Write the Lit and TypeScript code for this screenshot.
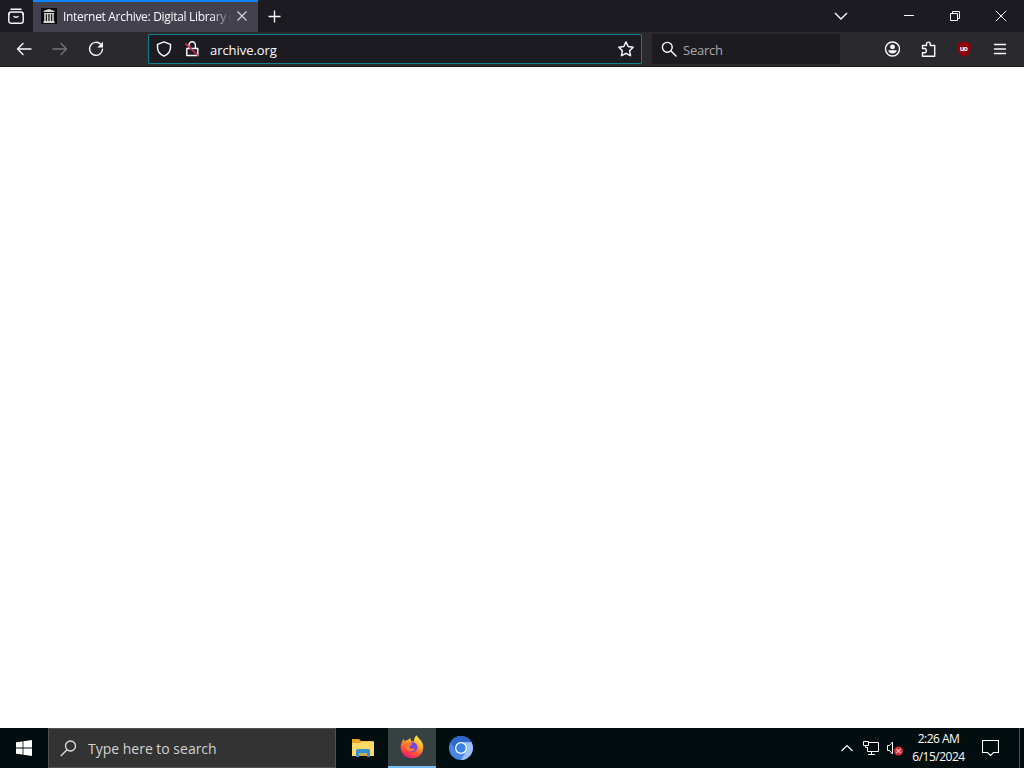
import { LitElement, html, css } from "lit";
import { customElement, property } from "lit/decorators.js";

@customElement("tab-strip")
export class TabStrip extends LitElement {
  static styles = css`
    :host {
      display: flex;
      height: 32px;
      background: #1c1b21;
      color: #fbfbfe;
    }
    svg {
      display: block;
      flex: none;
      fill: none;
      stroke: currentColor;
    }
    .view {
      width: 33px;
      display: flex;
      align-items: center;
      padding-left: 8px;
      box-sizing: border-box;
    }
    .tab {
      width: 225px;
      box-sizing: border-box;
      display: flex;
      align-items: center;
      padding: 0 10px 0 8px;
      background: #42414d;
      border-top: 2px solid #0a84ff;
    }
    .title {
      flex: 1;
      margin: 0 3px 0 6px;
      overflow: hidden;
      white-space: nowrap;
      font-size: 12px;
      line-height: 18px;
      letter-spacing: -0.31px;
      mask-image: linear-gradient(to left, transparent 1px, #000 22px);
    }
    .icon {
      margin-bottom: 2px;
    }
    .favicon {
      stroke: none;
    }
    .close {
      color: #d8d8de;
    }
    .new {
      padding: 9px 0 0 9px;
    }
    .controls {
      display: flex;
      margin-left: auto;
    }
    .control {
      width: 46px;
      display: flex;
      align-items: center;
      justify-content: center;
    }
    .list {
      width: 90px;
    }
  `;

  @property() title = "";

  render() {
    return html`
      <div class="view">
        <svg width="16" height="16" viewBox="0 0 16 16" stroke-width="1.4" stroke-linecap="round">
          <path d="M3 1.200h10" />
          <rect x=".8" y="4" width="14.400" height="11.200" rx="2.300" />
          <path d="M1 6.500V5.500M15 6.500V5.500M6 8.500q2 1.500 4 0" />
        </svg>
      </div>
      <div class="tab">
        <svg class="icon favicon" width="16" height="16" viewBox="0 0 16 16">
          <path fill="#0b0b0b" d="M0 0h16v16H0z" />
          <path
            fill="#d4d4d4"
            d="M8 1l5.500 2v1h-11V3zM3 5h10v1H3zM3.200 6h1.600v7H3.200zM5.900 6h1.500v7H5.900zM8.600 6h1.500v7H8.600zM11.200 6h1.600v7h-1.600zM2.500 13h11v2h-11z"
          />
        </svg>
        <div class="title">${this.title}</div>
        <svg class="icon close" width="12" height="12" viewBox="0 0 12 12" stroke-width="1.100">
          <path d="M1.500 1.500l9 9M10.500 1.500l-9 9" />
        </svg>
      </div>
      <div class="new">
        <svg width="14" height="14" viewBox="0 0 14 14" stroke-width="1.300">
          <path d="M7.500 1.500v12M1.500 7.500h12" />
        </svg>
      </div>
      <div class="controls">
        <div class="control list">
          <svg width="14" height="14" viewBox="0 0 14 14" stroke-width="1.400">
            <path d="M1 4l6 6 6-6" />
          </svg>
        </div>
        <div class="control">
          <svg width="10" height="10" viewBox="0 0 10 10"><path d="M0 4.500h10" /></svg>
        </div>
        <div class="control">
          <svg width="10" height="10" viewBox="0 0 10 10">
            <path d="M.5 2.500h7v7h-7zM2.500 2.500v-2h7v7h-2" />
          </svg>
        </div>
        <div class="control">
          <svg width="12" height="12" viewBox="0 0 12 12"><path d="M.8.8l10.400 10.400M11.200.8L.8 11.200" /></svg>
        </div>
      </div>
    `;
  }
}

@customElement("nav-bar")
export class NavBar extends LitElement {
  static styles = css`
    :host {
      display: flex;
      align-items: center;
      height: 35px;
      box-sizing: border-box;
      padding: 0 16px;
      background: #2a292e;
      border-bottom: 1px solid #17161b;
      color: #fbfbfe;
    }
    svg {
      display: block;
      flex: none;
      fill: none;
      stroke: currentColor;
      stroke-width: 1.4;
    }
    .buttons {
      display: flex;
      gap: 20px;
      width: 132px;
    }
    .disabled {
      color: #75747a;
    }
    .url {
      width: 494px;
      height: 30px;
      box-sizing: border-box;
      display: flex;
      align-items: center;
      padding: 0 7px;
      background: #1c1b22;
      border: 1px solid #127f8b;
      border-radius: 1px;
    }
    .lock {
      margin-left: 12px;
    }
    .address {
      flex: 1;
      margin-left: 10px;
      padding-top: 1px;
      font-size: 13px;
      letter-spacing: -0.05px;
    }
    .search {
      width: 188px;
      height: 30px;
      box-sizing: border-box;
      margin-left: 10px;
      padding-left: 9px;
      display: flex;
      align-items: center;
      gap: 6px;
      background: #1c1b20;
    }
    .hint {
      padding-top: 1px;
      font-size: 13px;
      letter-spacing: -0.25px;
      color: #a9a9ae;
    }
    .tools {
      display: flex;
      gap: 20px;
      margin-left: auto;
    }
    .badge {
      stroke: none;
    }
    .mark {
      font: bold 7px "Open Sans", sans-serif;
      fill: #fff;
    }
  `;

  @property() address = "";

  render() {
    return html`
      <div class="buttons">
        <svg width="16" height="16" viewBox="0 0 16 16" stroke-linecap="round" stroke-linejoin="round">
          <path d="M15 8H1.500M7 2.500L1.500 8 7 13.500" />
        </svg>
        <svg class="disabled" width="16" height="16" viewBox="0 0 16 16" stroke-linecap="round" stroke-linejoin="round">
          <path d="M1 8h13.500M9 2.500L14.500 8 9 13.500" />
        </svg>
        <svg width="16" height="16" viewBox="0 0 16 16" stroke-linecap="round">
          <path d="M12.700 3.300A6.500 6.500 0 1 0 14.500 8.300" />
          <path fill="currentColor" stroke="none" d="M15 .8v5.700H9.300z" />
        </svg>
      </div>
      <div class="url">
        <svg width="16" height="16" viewBox="0 0 16 16" stroke-linejoin="round">
          <path d="M8 .9l6.500 2.500v2.800c0 4-2.500 7.300-6.500 9-4-1.700-6.500-5-6.500-9V3.400z" />
        </svg>
        <svg class="lock" width="16" height="16" viewBox="0 0 16 16" stroke-linejoin="round">
          <path d="M5 7V4a3.200 3.200 0 0 1 6.400 0v3M2.800 7.500h11v7h-11z" />
          <path stroke="#e22850" stroke-width="1.700" d="M1.500 2.500l12.500 12" />
        </svg>
        <div class="address">${this.address}</div>
        <svg width="16" height="16" viewBox="0 0 16 16" stroke-linejoin="round">
          <path d="M8 .9l2.200 4.600 5 .7-3.600 3.500.9 5L8 12.300l-4.500 2.400.9-5L.8 6.200l5-.7z" />
        </svg>
      </div>
      <div class="search">
        <svg width="16" height="16" viewBox="0 0 16 16" stroke-linecap="round">
          <circle cx="6.300" cy="6.300" r="4.900" />
          <path d="M10 10l5 5" />
        </svg>
        <div class="hint">Search</div>
      </div>
      <div class="tools">
        <svg width="16" height="16" viewBox="-.5 0 16 16">
          <circle cx="8" cy="8" r="7" />
          <circle cx="8" cy="5.900" r="2.400" fill="currentColor" stroke="none" />
          <path fill="currentColor" stroke="none" d="M3.800 9.300h8.400c0 1.900-1.800 3.300-4.200 3.300s-4.200-1.400-4.200-3.300z" />
        </svg>
        <svg width="16" height="16" viewBox="-.5 0 16 16" stroke-linejoin="round">
          <path
            d="M2 7.500V4.500h4V3a1.900 1.900 0 0 1 3.800 0v1.500h4.400v10.700H2v-3.500h2.200a1.600 1.600 0 0 0 1.600-1.600v-1a1.600 1.600 0 0 0-1.600-1.600z"
          />
        </svg>
        <svg class="badge" width="16" height="16" viewBox="0 0 16 16">
          <path fill="#900006" d="M8 0c2 1.500 4 2 6.700 2v5c0 4-2.200 7-6.700 9C3.500 14 1.300 11 1.300 7V2C4 2 6 1.500 8 0z" />
          <text class="mark" x="3.700" y="9.700">u</text>
          <text class="mark" x="7.600" y="9.700">o</text>
        </svg>
        <svg width="16" height="16" viewBox="0 0 16 16" stroke-linecap="round">
          <path d="M2.500 3.500h11M2.500 8h11M2.500 12.500h11" />
        </svg>
      </div>
    `;
  }
}

@customElement("task-bar")
export class TaskBar extends LitElement {
  static styles = css`
    :host {
      display: flex;
      height: 40px;
      background: #020d0f;
      color: #fff;
    }
    svg {
      display: block;
      flex: none;
      fill: none;
    }
    .app {
      width: 48px;
      height: 40px;
      flex: none;
      display: flex;
      align-items: center;
      justify-content: center;
    }
    .first {
      width: 52px;
    }
    .first svg,
    .last svg {
      margin-left: 2px;
    }
    .active {
      box-sizing: border-box;
      background: #374142;
      border-bottom: 2px solid #76b9ed;
    }
    .search {
      width: 288px;
      box-sizing: border-box;
      border: 1px solid #505050;
      background: #333;
      display: flex;
      align-items: center;
      gap: 11px;
      padding-left: 11px;
    }
    .hint {
      color: #d2d2d2;
      font-size: 14px;
      letter-spacing: -0.01px;
      padding-top: 1px;
    }
    .tray {
      display: flex;
      align-items: center;
      margin-left: auto;
    }
    .tray svg {
      stroke: currentColor;
    }
    .net {
      margin-left: 10px;
    }
    .volume {
      margin-left: 6px;
    }
    .clock {
      width: 71px;
      font-size: 12px;
      line-height: 18px;
      letter-spacing: -0.5px;
      text-align: center;
    }
    .notes {
      margin-left: 8px;
    }
    .edge {
      width: 5px;
      height: 40px;
      box-sizing: border-box;
      border-left: 1px solid #4b5455;
      margin-left: 20px;
    }
  `;

  @property() time = "";
  @property() date = "";

  render() {
    return html`
      <div class="app">
        <svg width="16" height="16" viewBox="0 0 16 16">
          <path fill="#fff" d="M0 2.300l6.600-.9v6.200H0zM7.400 1.300L16 0v7.600H7.400zM0 8.400h6.600v6.200L0 13.700zM7.400 8.400H16V16l-8.600-1.200z" />
        </svg>
      </div>
      <div class="search">
        <svg width="17" height="17" viewBox="0 0 17 17" stroke="#e0e0e0" stroke-width="1.300">
          <circle cx="10.500" cy="6" r="5" />
          <path d="M7 9.700L.8 16" />
        </svg>
        <div class="hint">Type here to search</div>
      </div>
      <div class="app first">
        <svg width="22" height="18" viewBox="0 0 22 18">
          <path fill="#e8a526" d="M0 0h7l2 2h12v5H0z" />
          <path fill="#ffda68" d="M0 4h8l1.500-1.500H22V17H0z" />
          <path fill="#358fd5" d="M4 18v-6.500q0-1.500 1.500-1.500h11q1.500 0 1.500 1.500V18h-3v-3.500H7V18z" />
          <path fill="#dba63b" d="M7 14.500h8V17H7z" />
        </svg>
      </div>
      <div class="app active">
        <svg width="24" height="24" viewBox="0 0 24 24">
          <defs>
            <linearGradient id="flame" x1=".8" y1="0" x2=".3" y2="1">
              <stop offset="0" stop-color="#fff44f" />
              <stop offset=".4" stop-color="#ffa62d" />
              <stop offset=".7" stop-color="#ff5036" />
              <stop offset="1" stop-color="#e9157d" />
            </linearGradient>
          </defs>
          <path
            fill="url(#flame)"
            d="M1.500 8c.4-2 1.300-3 2.500-4 0 1 .2 1.700.7 2.300C5.800 5.300 7 5 8 5c.8-1 1.500-1.600 2.600-2-.3 1.300 0 2.400 1 3.200L14 6.500c-.4-2.300.7-4.600 2.500-6.300 1.500 3 4.500 4.600 5.800 7.600.8 2 1.200 4 .8 6.200C22.400 19.500 17.700 23.300 12.200 23.300S1.500 19.500.8 14C.5 11.500.7 9.500 1.500 8z"
          />
          <circle cx="12.500" cy="12.300" r="5" fill="#7448df" />
          <path
            fill="#ff7a2b"
            d="M4 8c2.500-1.500 5-1 7 .3l1.500.5c-.3 1.300-1.800 1.500-2.700 2.200-.8.5-.6 1.600.3 2.300 1.500 1 3.400-.2 5 .4-1 2-3 3-5.200 2.500C7 15.500 4 12 4 8z"
          />
        </svg>
      </div>
      <div class="app last">
        <svg width="24" height="24" viewBox="0 0 24 24">
          <circle cx="12" cy="12" r="12" fill="#4a86e8" />
          <path fill="#2f68c8" d="M1.600 6A12 12 0 0 1 22.400 6.200H12A6 6 0 0 0 6.800 15z" />
          <path fill="#9dc0f7" d="M22.400 6.200A12 12 0 0 1 12 24l5.200-9A6 6 0 0 0 12 6.200z" />
          <circle cx="12" cy="12" r="6" fill="#fff" />
          <circle cx="12" cy="12" r="4.700" fill="#3b82e8" />
        </svg>
      </div>
      <div class="tray">
        <svg width="12" height="8" viewBox="0 0 12 8" stroke-width="1.200">
          <path d="M.5 7L6 1.500 11.500 7" />
        </svg>
        <svg class="net" width="17" height="16" viewBox="0 0 17 16">
          <path d="M5.500 2.500h10v9h-11V7M8.500 11.500v3M5 14.500h7M.5 1.500h5v4h-5zM2.500 5.500v2h2" />
        </svg>
        <svg class="volume" width="17" height="16" viewBox="0 0 17 16">
          <path d="M1.500 5.500h2l3-3.500v12l-3-3.500h-2z" />
          <circle cx="12.500" cy="11" r="4.500" fill="#d52f3b" stroke="none" />
          <path d="M10.500 9l4 4M14.500 9l-4 4" />
        </svg>
        <div class="clock">
          <div>${this.time}</div>
          <div>${this.date}</div>
        </div>
        <svg class="notes" width="17" height="17" viewBox="0 0 17 17" stroke-width="1.100">
          <path d="M.5 .5h16v12h-5l-3 3-3-3h-5z" />
        </svg>
        <div class="edge"></div>
      </div>
    `;
  }
}

@customElement("app-root")
export class AppRoot extends LitElement {
  static styles = css`
    :host {
      display: flex;
      flex-direction: column;
      width: 1024px;
      height: 768px;
      overflow: hidden;
      font-family: "Open Sans", "Noto Sans", sans-serif;
    }
    .page {
      flex: 1;
      background: #fff;
    }
  `;

  render() {
    return html`
      <tab-strip .title=${"Internet Archive: Digital Library of"}></tab-strip>
      <nav-bar address="archive.org"></nav-bar>
      <div class="page"></div>
      <task-bar time="2:26 AM" date="6/15/2024"></task-bar>
    `;
  }
}
